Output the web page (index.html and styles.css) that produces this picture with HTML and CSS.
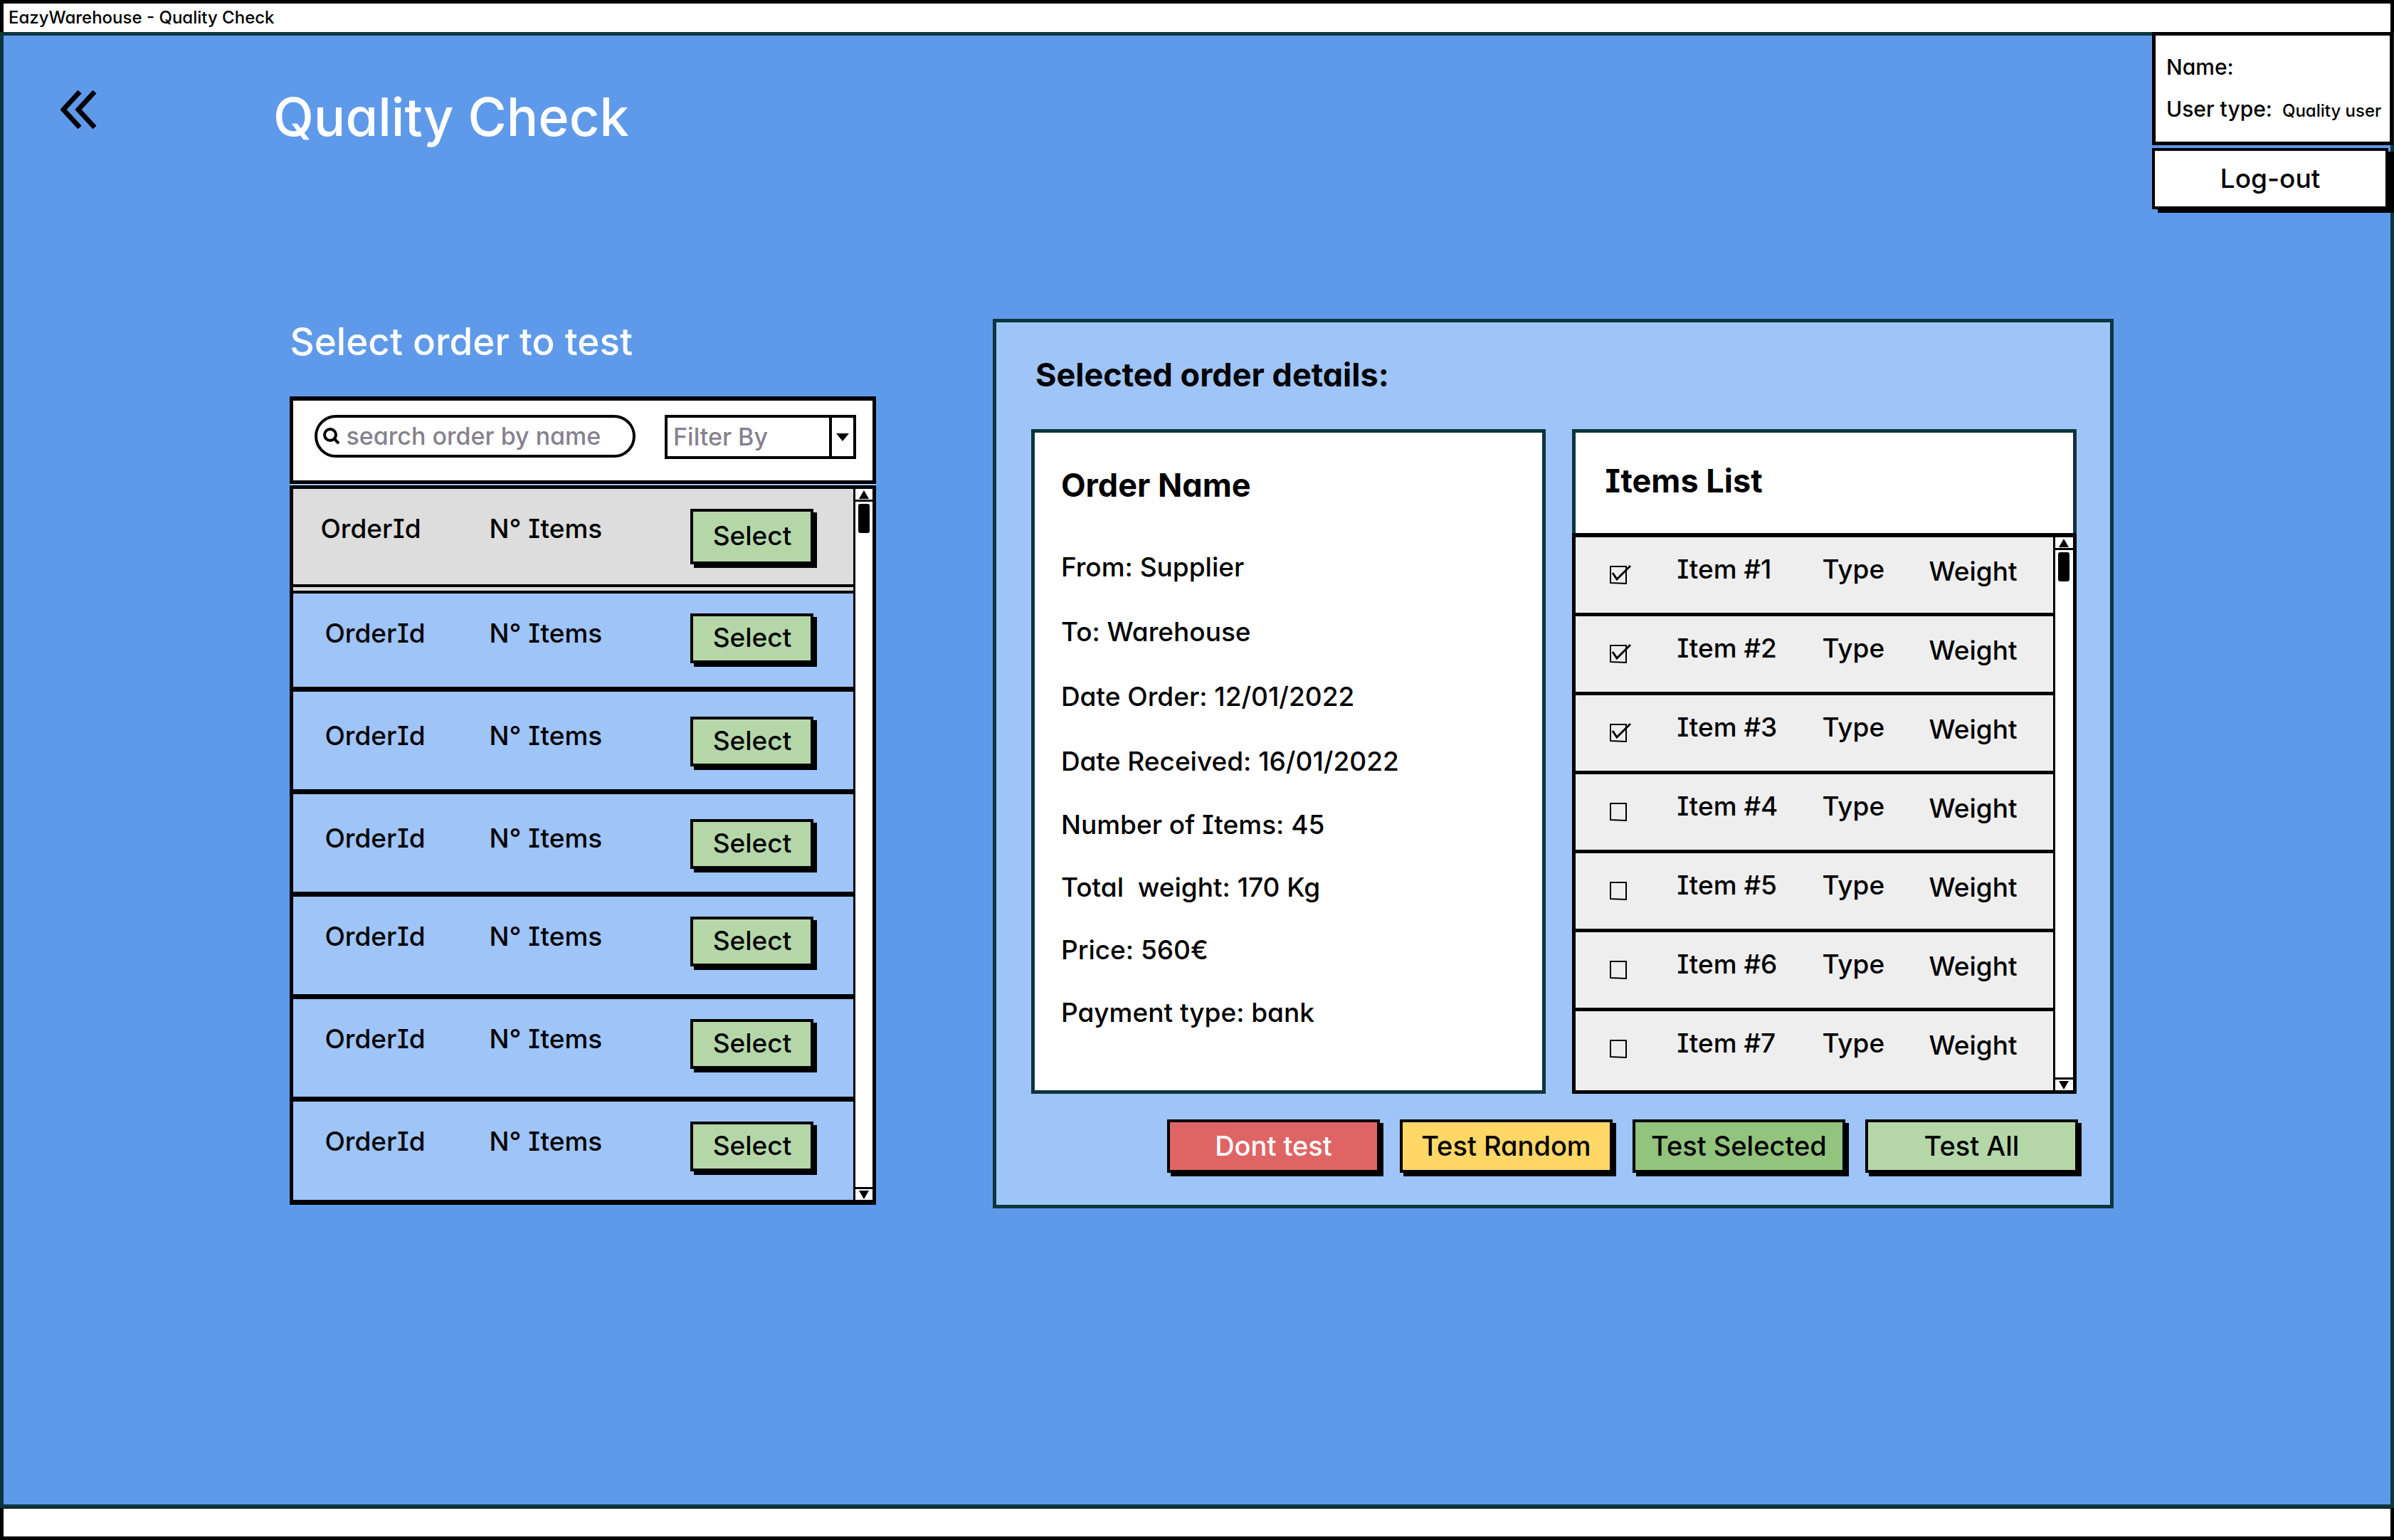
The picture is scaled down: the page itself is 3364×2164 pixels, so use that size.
FILE: index.html
```html
<!DOCTYPE html>
<html lang="en">
<head>
<meta charset="utf-8">
<meta name="viewport" content="width=device-width, initial-scale=1">
<title>EazyWarehouse - Quality Check</title>
<link rel="stylesheet" href="styles.css">
</head>
<body>
<header class="titlebar">EazyWarehouse - Quality Check</header>
<main class="screen">
  <div class="topbar">
    <button class="back" type="button" aria-label="Back">
      <svg viewBox="0 0 52 54" width="52" height="54"><path d="M27 2 4 27l23 25M48 2 25 27l23 25"/></svg>
    </button>
    <h1>Quality Check</h1>
    <div class="account">
      <div class="user-box">
        <p>Name:</p>
        <p>User type: <span class="user-type">Quality user</span></p>
      </div>
      <button class="logout" type="button">Log-out</button>
    </div>
  </div>

  <div class="workspace">
    <section class="orders">
      <h2>Select order to test</h2>
      <div class="orders-panel">
        <div class="orders-tools">
          <label class="search">
            <svg viewBox="0 0 24 24" width="24" height="24" aria-hidden="true"><circle cx="10" cy="10" r="8"/><path d="m16 16 6 6"/></svg>
            <input type="search" placeholder="search order by name" aria-label="search order by name">
          </label>
          <select class="filter" aria-label="Filter By"><option>Filter By</option></select>
        </div>
        <div class="list orders-list">
          <table>
            <colgroup><col class="col-id"><col class="col-count"><col></colgroup>
            <tbody>
              <tr class="current"><td>OrderId</td><td>N° Items</td><td><button class="btn select" type="button">Select</button></td></tr>
              <tr class="short"><td>OrderId</td><td>N° Items</td><td><button class="btn select" type="button">Select</button></td></tr>
              <tr class="loose"><td>OrderId</td><td>N° Items</td><td><button class="btn select" type="button">Select</button></td></tr>
              <tr class="loose"><td>OrderId</td><td>N° Items</td><td><button class="btn select" type="button">Select</button></td></tr>
              <tr><td>OrderId</td><td>N° Items</td><td><button class="btn select" type="button">Select</button></td></tr>
              <tr><td>OrderId</td><td>N° Items</td><td><button class="btn select" type="button">Select</button></td></tr>
              <tr class="short"><td>OrderId</td><td>N° Items</td><td><button class="btn select" type="button">Select</button></td></tr>
            </tbody>
          </table>
          <div class="scrollbar">
            <button type="button" aria-label="Scroll up"><svg viewBox="0 0 14 12" width="14" height="12"><path d="M7 0 14 12H0z"/></svg></button>
            <div class="track"><div class="thumb"></div></div>
            <button type="button" aria-label="Scroll down"><svg viewBox="0 0 14 12" width="14" height="12"><path d="M0 0h14L7 12z"/></svg></button>
          </div>
        </div>
      </div>
    </section>

    <section class="details">
      <h2>Selected order details:</h2>
      <div class="cards">
        <article class="order-card">
          <h3>Order Name</h3>
          <ul class="facts">
            <li>From: Supplier</li>
            <li>To: Warehouse</li>
            <li>Date Order: 12/01/2022</li>
            <li>Date Received: 16/01/2022</li>
          </ul>
          <ul class="facts totals">
            <li>Number of Items: 45</li>
            <li>Total&nbsp; weight: 170 Kg</li>
            <li>Price: 560€</li>
            <li>Payment type: bank</li>
          </ul>
        </article>
        <article class="items-card">
          <h3>Items List</h3>
          <div class="list items-list">
            <table>
              <colgroup><col class="col-check"><col class="col-item"><col class="col-type"><col></colgroup>
              <tbody>
                <tr><td><input type="checkbox" id="i1" checked></td><td><label for="i1">Item #1</label></td><td>Type</td><td>Weight</td></tr>
                <tr><td><input type="checkbox" id="i2" checked></td><td><label for="i2">Item #2</label></td><td>Type</td><td>Weight</td></tr>
                <tr><td><input type="checkbox" id="i3" checked></td><td><label for="i3">Item #3</label></td><td>Type</td><td>Weight</td></tr>
                <tr><td><input type="checkbox" id="i4"></td><td><label for="i4">Item #4</label></td><td>Type</td><td>Weight</td></tr>
                <tr><td><input type="checkbox" id="i5"></td><td><label for="i5">Item #5</label></td><td>Type</td><td>Weight</td></tr>
                <tr><td><input type="checkbox" id="i6"></td><td><label for="i6">Item #6</label></td><td>Type</td><td>Weight</td></tr>
                <tr><td><input type="checkbox" id="i7"></td><td><label for="i7">Item #7</label></td><td>Type</td><td>Weight</td></tr>
              </tbody>
            </table>
            <div class="scrollbar">
              <button type="button" aria-label="Scroll up"><svg viewBox="0 0 14 12" width="14" height="12"><path d="M7 0 14 12H0z"/></svg></button>
              <div class="track"><div class="thumb"></div></div>
              <button type="button" aria-label="Scroll down"><svg viewBox="0 0 14 12" width="14" height="12"><path d="M0 0h14L7 12z"/></svg></button>
            </div>
          </div>
        </article>
      </div>
      <div class="actions">
        <button class="btn danger" type="button">Dont test</button>
        <button class="btn random" type="button">Test Random</button>
        <button class="btn selected" type="button">Test Selected</button>
        <button class="btn" type="button">Test All</button>
      </div>
    </section>
  </div>
</main>
<footer class="statusbar"></footer>
</body>
</html>
```
FILE: styles.css
```css
:root {
  --blue: #5f9aea;
  --light: #9fc4f8;
  --teal: #0d353d;
  --green: #b5d7a8;
  --grey-text: #86818f;
}

* { box-sizing: border-box; }

body {
  margin: 0;
  min-height: 100vh;
  display: flex;
  flex-direction: column;
  overflow-x: hidden;
  background: #fff;
  color: #000;
  font: 500 37px/44px Inter, "Open Sans", sans-serif;
  font-feature-settings: "cv11", "cv08";
}

h1, h2, h3, p, ul { margin: 0; padding: 0; }
ul { list-style: none; }
button, input, select { font: inherit; font-feature-settings: inherit; color: inherit; margin: 0; }
button { padding: 0; border: 0; background: none; border-radius: 0; }
svg { display: block; }

.titlebar {
  border: 5px solid #000;
  border-bottom: 0;
  padding-left: 7px;
  font-size: 24px;
  line-height: 40px;
}

.screen {
  flex: 1;
  border: 5px solid var(--teal);
  background: var(--blue);
}

.statusbar {
  height: 45px;
  border: 5px solid #000;
  border-top: 1px solid #000;
}

.topbar { display: flex; align-items: flex-start; }

.back { margin: 77px 0 0 80px; }
.back svg { fill: none; stroke: #000; stroke-width: 7; }

h1 {
  margin: 69px 0 0 247px;
  flex: 1;
  color: #fff;
  font-weight: 500;
  font-size: 74px;
  line-height: 90px;
}

.account {
  width: 340px;
  margin: -5px -5px 0 0;
  display: flex;
  flex-direction: column;
  align-items: flex-start;
  gap: 4px;
}

.user-box {
  width: 339px;
  height: 159px;
  border: 5px solid #000;
  background: #fff;
  padding: 15px 0 0 15px;
  font-size: 30px;
  line-height: 59px;
  white-space: nowrap;
}

.user-type { font-size: 24px; margin-left: 6px; }

.logout {
  width: 332px;
  height: 86px;
  border: 4px solid #000;
  background: #fff;
  box-shadow: 8px 5px 0 #000;
  text-align: center;
}

.workspace {
  display: grid;
  grid-template-columns: minmax(0, 824fr) minmax(0, 1576fr);
  column-gap: 6.4%;
  align-items: start;
  padding: 154px 11.6% 200px 12%;
}

.orders h2 {
  margin: 0 0 45px;
  color: #fff;
  font-weight: 500;
  font-size: 53px;
  line-height: 64px;
}

.orders-panel { background: var(--light); }

.orders-tools {
  display: flex;
  gap: 41px;
  height: 123px;
  border: 5px solid #000;
  border-top-width: 6px;
  background: #fff;
  padding: 20px 23px 0 30px;
  color: var(--grey-text);
  font-size: 34px;
}

.search {
  flex: 452;
  min-width: 0;
  display: flex;
  align-items: center;
  gap: 8px;
  height: 60px;
  border: 4px solid #000;
  border-radius: 32px;
  padding: 0 8px;
}

.search svg { flex: none; fill: none; stroke: #000; stroke-width: 4; }

.search input {
  flex: 1;
  min-width: 0;
  padding: 0;
  border: 0;
  outline: 0;
  background: none;
  appearance: none;
}

.search input::placeholder { color: var(--grey-text); opacity: 1; }

.filter {
  flex: 268;
  min-width: 0;
  height: 62px;
  border: 4px solid #000;
  border-radius: 0;
  padding: 0 0 0 8px;
  appearance: none;
  background: #fff url("data:image/svg+xml,%3Csvg xmlns='http://www.w3.org/2000/svg' width='34' height='54'%3E%3Cpath d='M0 0h4v54H0zM10 22h18l-9 11z'/%3E%3C/svg%3E") right center no-repeat;
}

.list { display: flex; border: 5px solid #000; }
.orders-list { margin-top: 2px; border-bottom-width: 7px; }
.items-list { border-top-width: 6px; }

table { flex: 1; width: 100%; min-width: 0; table-layout: fixed; border-spacing: 0; }
td { padding: 0; vertical-align: top; }

.orders-list td { height: 144px; padding-top: 34px; border-bottom: 7px solid #000; }
.orders-list td:last-child { padding-top: 28px; }
.orders-list td:first-child { padding-left: 44px; }
.orders-list .loose td { padding-top: 40px; }
.orders-list .loose td:last-child { padding-top: 35px; }
.orders-list .short td { height: 138px; }
.orders-list tr:last-child td { border-bottom: 0; }
.orders-list .current td { height: 147px; background: #ddd; border-bottom: 13px double #000; }
.orders-list .current td:first-child { padding-left: 38px; }
.orders-list .current .select { height: 78px; }
.col-id { width: 275px; }
.col-count { width: 283px; }

.items-list td { height: 111px; padding-top: 23px; border-bottom: 5px solid #000; background: #eee; }
.items-list td:first-child { padding: 38px 0 0 46px; line-height: 0; }
.items-list td:last-child { padding-top: 26px; }
.items-list tr:last-child td { border-bottom: 0; }
.col-check { width: 142px; }
.col-item { width: 204px; }
.col-type { width: 150px; }

input[type="checkbox"] {
  appearance: none;
  width: 34px;
  height: 30px;
  background: url("data:image/svg+xml,%3Csvg xmlns='http://www.w3.org/2000/svg' width='34' height='30' fill='none' stroke='%23000' stroke-width='2'%3E%3Cpath d='M3 3h22v24l-22-1z'/%3E%3C/svg%3E") no-repeat;
}

input[type="checkbox"]:checked {
  background-image: url("data:image/svg+xml,%3Csvg xmlns='http://www.w3.org/2000/svg' width='34' height='30' fill='none' stroke='%23000' stroke-width='2'%3E%3Cpath d='M3 3h22v24l-22-1z'/%3E%3Cpath stroke-width='3' d='m6 12 6 9L31 2'/%3E%3C/svg%3E");
}

.scrollbar {
  flex: none;
  width: 27px;
  display: flex;
  flex-direction: column;
  border-left: 3px solid #000;
  background: #fff;
}

.items-list .scrollbar { width: 28px; }
.scrollbar button { height: 15px; display: grid; place-items: center; }
.track { flex: 1; border: solid #000; border-width: 3px 0; padding-top: 3px; }
.thumb { width: 16px; height: 41px; margin: 0 auto; border-radius: 3px; background: #000; }

.btn {
  height: 75px;
  border: 4px solid #000;
  padding-bottom: 2px;
  background: var(--green);
  box-shadow: 5px 5px 0 #000;
  text-align: center;
}

.select { width: 173px; height: 70px; }

.details {
  border: 5px solid var(--teal);
  background: var(--light);
  padding: 46px 47px 45px 49px;
}

.details h2 {
  margin: 0 0 48px 6px;
  font-weight: 700;
  font-size: 45px;
  line-height: 56px;
}

h3 { font-weight: 700; font-size: 45px; line-height: 52px; }

.cards {
  display: grid;
  grid-template-columns: minmax(0, 724fr) minmax(0, 709fr);
  gap: 37px;
}

.order-card {
  border: 5px solid var(--teal);
  background: #fff;
  padding: 48px 37px 0;
}

.order-card h3 { margin-bottom: 43px; }
.facts { line-height: 91px; }
.totals { line-height: 88px; }

.items-card h3 {
  height: 146px;
  border: 5px solid var(--teal);
  border-bottom: 0;
  background: #fff;
  padding: 42px 41px 0;
}

.actions {
  display: flex;
  justify-content: flex-end;
  gap: 28px;
  margin: 36px -2px 0 0;
  font-size: 38px;
}

.actions .btn { width: 299px; }
.danger { background: #df6565; color: #fff; }
.random { background: #fed766; }
.selected { background: #92c47d; }
```
